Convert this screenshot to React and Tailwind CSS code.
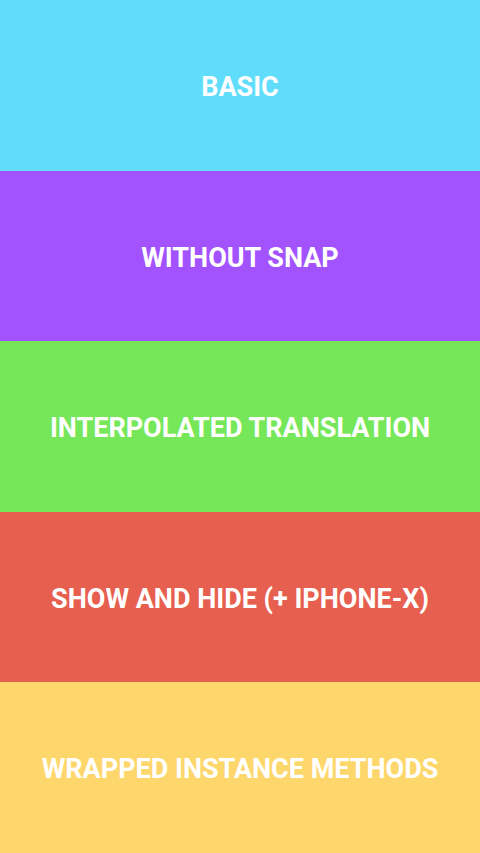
const items = [
  { label: "BASIC", bg: "bg-[#61ddfc]" },
  { label: "WITHOUT SNAP", bg: "bg-[#a253fe]" },
  { label: "INTERPOLATED TRANSLATION", bg: "bg-[#77e75a]" },
  { label: "SHOW AND HIDE (+ IPHONE-X)", bg: "bg-[#e75f4f]" },
  { label: "WRAPPED INSTANCE METHODS", bg: "bg-[#fdd76b]" },
];

export default function App() {
  return (
    <div className="flex h-[853px] w-[480px] flex-col font-['Roboto',sans-serif]">
      {items.map((item) => (
        <div
          key={item.label}
          className={`flex flex-1 items-center justify-center ${item.bg}`}
        >
          <span className="pt-1 text-[27px] font-bold text-white">{item.label}</span>
        </div>
      ))}
    </div>
  );
}
